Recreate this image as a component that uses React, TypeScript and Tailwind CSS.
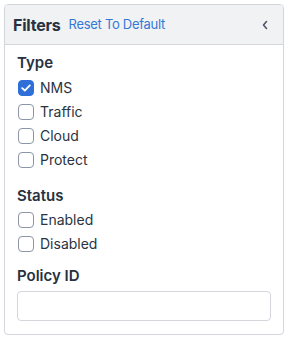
import { useState } from "react"

type CheckRowProps = {
    label: string
    checked: boolean
    onToggle: () => void
}

const CheckRow = (props: CheckRowProps) => {
    return (
        <label className="flex h-6 items-center gap-[6px] cursor-pointer">
            <span
                className={
                    props.checked
                        ? "ml-px flex h-4 w-4 items-center justify-center rounded-[4px] border border-[#2f6fd8] bg-[#2f6fd8]"
                        : "ml-px flex h-4 w-4 items-center justify-center rounded-[4px] border border-[#8b95a5] bg-white"
                }
                onClick={props.onToggle}
            >
                {props.checked && (
                    <svg width="10" height="8" viewBox="0 0 10 8" fill="none">
                        <path d="M1.2 4.2 L3.8 6.6 L8.8 1.4" stroke="white" strokeWidth="1.8" strokeLinecap="round" strokeLinejoin="round" />
                    </svg>
                )}
            </span>
            <span className="text-[14px] leading-5 text-[#2a3340]">{props.label}</span>
        </label>
    )
}

export default function App() {
    const [checked, setChecked] = useState<Record<string, boolean>>({ NMS: true })
    const toggle = (k: string) => setChecked({ ...checked, [k]: !checked[k] })

    return (
        <div className="p-1 bg-white w-[288px] h-[339px]" style={{ fontFamily: "Inter, 'Noto Sans', sans-serif" }}>
            <div className="flex flex-col w-[280px] h-[331px] border border-[#d3d6db] rounded-[4px] overflow-hidden">
                <div className="flex h-[40px] shrink-0 items-center bg-[#f1f2f4] border-b border-[#d3d6db] pl-2 pr-[14px]">
                    <span className="text-[16px] font-bold text-[#273140] tracking-[-0.2px]">Filters</span>
                    <span className="ml-2 text-[13px] text-[#3478d4] tracking-[-0.3px] cursor-pointer">Reset To Default</span>
                    <svg className="ml-auto" width="8" height="10" viewBox="0 0 8 10" fill="none">
                        <path d="M5.5 1.5 L2.5 5 L5.5 8.5" stroke="#4b5563" strokeWidth="1.6" strokeLinecap="round" strokeLinejoin="round" />
                    </svg>
                </div>
                <div className="flex flex-col px-3 pt-[8px]">
                    <div className="text-[15px] leading-5 font-semibold text-[#273140]">Type</div>
                    <div className="mt-[3px] flex flex-col">
                        {["NMS", "Traffic", "Cloud", "Protect"].map((k) => (
                            <CheckRow key={k} label={k} checked={!!checked[k]} onToggle={() => toggle(k)} />
                        ))}
                    </div>
                    <div className="mt-[14px] text-[15px] leading-5 font-semibold text-[#273140]">Status</div>
                    <div className="mt-[2px] flex flex-col">
                        {["Enabled", "Disabled"].map((k) => (
                            <CheckRow key={k} label={k} checked={!!checked[k]} onToggle={() => toggle(k)} />
                        ))}
                    </div>
                    <div className="mt-[10px] text-[15px] leading-5 font-semibold text-[#273140]">Policy ID</div>
                    <input className="mt-[5px] h-[30px] w-full rounded-[4px] border border-[#d3d6db] px-2 text-[14px] outline-none" />
                </div>
            </div>
        </div>
    )
}
